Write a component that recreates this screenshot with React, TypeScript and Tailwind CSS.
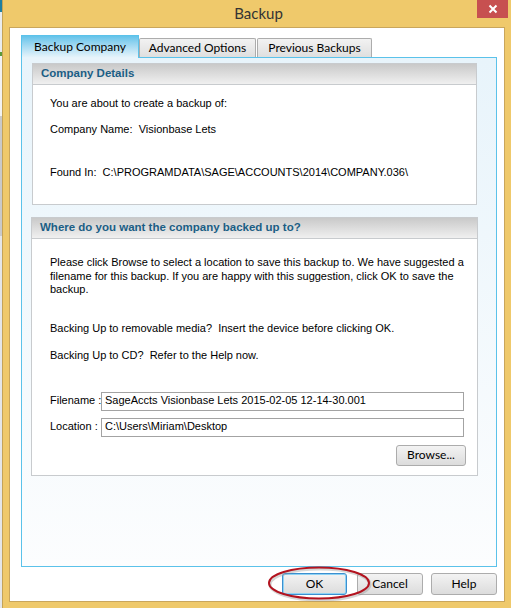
import React from 'react';

const body = { fontFamily: '"Liberation Sans", Arial, sans-serif' };
const ui = { fontFamily: 'Lato, "Liberation Sans", sans-serif' };

const GroupHeader = ({ title }: { title: string }) => (
  <div
    className="h-[21px] flex items-center pl-[8px] border-b border-[#c8cbce] bg-gradient-to-b from-[#c9c9c9] to-[#f0f0f0] text-[11.5px] font-bold text-[#1b5e85]"
    style={body}
  >
    {title}
  </div>
);

const Btn = ({ label, className = '' }: { label: string; className?: string }) => (
  <button
    className={`flex items-center justify-center rounded-[3px] border border-[#acacac] bg-gradient-to-b from-[#f3f3f3] to-[#dcdcdc] text-[12px] text-black ${className}`}
    style={ui}
  >
    {label}
  </button>
);

const Field = ({ label, value }: { label: string; value: string }) => (
  <div className="flex items-center h-[19px]">
    <span className="w-[51px] shrink-0 whitespace-nowrap text-[11px] text-black">{label}</span>
    <div className="w-[363px] shrink-0 h-[19px] border border-[#a3a3a3] bg-white pl-[3px] flex items-center whitespace-nowrap text-[11px] text-black">
      {value}
    </div>
  </div>
);

export default function App() {
  return (
    <div className="flex w-[511px] h-[608px] overflow-hidden bg-[#d8dde0]">
      {/* desktop behind the dialog */}
      <div className="w-[2px] h-full flex flex-col">
        <div className="h-[12px] bg-[#1f7fa0]" />
        <div className="h-[40px] bg-[#e9ecee]" />
        <div className="h-[4px] bg-[#5a9a3a]" />
        <div className="h-[60px] bg-[#f2f2f2]" />
        <div className="h-[120px] bg-[#c9c9c9]" />
        <div className="flex-1 bg-[#e4e6e8]" />
      </div>

      <div className="relative w-[509px] h-full border-l border-[#c4a357] bg-[#efc96b] flex flex-col">
        <div className="h-[27px] flex items-center justify-center pl-[3px] text-[15px] text-[#333]" style={ui}>
          Backup
        </div>
        <div className="absolute right-[3px] top-0 w-[31px] h-[18px] bg-[#c75050] flex items-center justify-center">
          <svg width="10" height="10" viewBox="0 0 10 10">
            <path d="M1.5 1.5 L8.5 8.5 M8.5 1.5 L1.5 8.5" stroke="#fff" strokeWidth="2" />
          </svg>
        </div>

        <div className="ml-[6px] w-[496px] h-[575px] border border-[#c9a65c] bg-white pl-[11px] pt-[7px]" style={body}>
          {/* tabs */}
          <div className="flex items-end h-[22px]">
            <div
              className="relative z-10 -mb-px w-[118px] h-[23px] border border-b-0 border-[#5bc2ea] bg-gradient-to-b from-[#62c3ea] to-[#e9f5fb] flex items-center justify-center pb-[1px] text-[12px] text-black"
              style={ui}
            >
              Backup Company
            </div>
            <div
              className="w-[117px] h-[19px] border border-b-0 border-[#acacac] rounded-t-[2px] bg-gradient-to-b from-[#f2f2f2] to-[#dfdfdf] flex items-center justify-center text-[12px] text-black"
              style={ui}
            >
              Advanced Options
            </div>
            <div
              className="ml-[1px] w-[115px] h-[19px] border border-b-0 border-[#acacac] rounded-t-[2px] bg-gradient-to-b from-[#f2f2f2] to-[#dfdfdf] flex items-center justify-center text-[12px] text-black"
              style={ui}
            >
              Previous Backups
            </div>
          </div>

          {/* panel */}
          <div className="w-[476px] h-[510px] border border-[#5bc2ea] bg-gradient-to-b from-[#e8f4fb] to-[#fcfdfe] pt-[5px]">
            <div className="ml-[10px] w-[445px] h-[142px] border border-[#c8cbce] bg-white">
              <GroupHeader title="Company Details" />
              <div className="pl-[17px] pt-[12px] text-[11px] leading-[13px] text-black">
                <div>You are about to create a backup of:</div>
                <div className="mt-[13px]">Company Name:&nbsp; Visionbase Lets</div>
                <div className="mt-[30px]">Found In:&nbsp; C:\PROGRAMDATA\SAGE\ACCOUNTS\2014\COMPANY.036\</div>
              </div>
            </div>

            <div className="mt-[12px] ml-[9px] w-[447px] h-[259px] border border-[#c8cbce] bg-white">
              <GroupHeader title="Where do you want the company backed up to?" />
              <div className="pl-[18px] pr-[8px] pt-[17px] text-[11px] leading-[13.5px] text-black">
                <p>
                  Please click Browse to select a location to save this backup to. We have suggested a filename for this
                  backup. If you are happy with this suggestion, click OK to save the backup.
                </p>
                <p className="mt-[25px]">Backing Up to removable media?&nbsp; Insert the device before clicking OK.</p>
                <p className="mt-[14px]">Backing Up to CD?&nbsp; Refer to the Help now.</p>
                <div className="mt-[29px] flex flex-col gap-[7px]">
                  <Field label="Filename :" value="SageAccts Visionbase Lets 2015-02-05 12-14-30.001" />
                  <Field label="Location :" value="C:\Users\Miriam\Desktop" />
                </div>
                <div className="mt-[8px] flex justify-end pr-[8px]">
                  <Btn label="Browse..." className="mr-[-5px] w-[70px] h-[21px]" />
                </div>
              </div>
            </div>
          </div>

          {/* buttons */}
          <div className="relative w-[476px] mt-[6px] flex justify-end">
            <Btn label="OK" className="w-[65px] h-[22px] !border-[#3c8fcf] shadow-[inset_0_0_0_1px_#8fd3f5]" />
            <Btn label="Cancel" className="ml-[10px] w-[66px] h-[22px]" />
            <Btn label="Help" className="ml-[8px] w-[66px] h-[22px]" />
            <svg className="absolute left-[246px] top-[-7px]" width="106" height="36" viewBox="0 0 106 36">
              <ellipse cx="53" cy="18.5" rx="50" ry="15.5" fill="none" stroke="#8a8a8a" strokeOpacity="0.35" strokeWidth="3" />
              <ellipse cx="52" cy="17" rx="50" ry="15.5" fill="none" stroke="#b3131f" strokeWidth="2" />
            </svg>
          </div>
        </div>
      </div>
    </div>
  );
}
